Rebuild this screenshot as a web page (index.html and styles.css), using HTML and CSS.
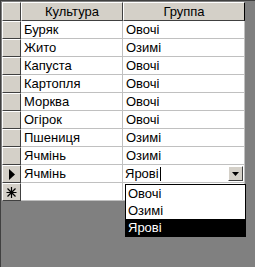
FILE: index.html
```html
<!DOCTYPE html>
<html lang="uk">
<head>
    <meta charset="UTF-8">
    <link rel="stylesheet" href="styles.css">
    <title>Культура</title>
</head>
<body>
    <div class="okno">
        <div class="tablica">
            <div class="ryadok verh">
                <div class="selektor shapka"></div>
                <div class="komirka shapka">Культура</div>
                <div class="komirka shapka">Группа</div>
            </div>
            <div class="ryadok"><div class="selektor"></div><div class="komirka">Буряк</div><div class="komirka">Овочі</div></div>
            <div class="ryadok"><div class="selektor"></div><div class="komirka">Жито</div><div class="komirka">Озимі</div></div>
            <div class="ryadok"><div class="selektor"></div><div class="komirka">Капуста</div><div class="komirka">Овочі</div></div>
            <div class="ryadok"><div class="selektor"></div><div class="komirka">Картопля</div><div class="komirka">Овочі</div></div>
            <div class="ryadok"><div class="selektor"></div><div class="komirka">Морква</div><div class="komirka">Овочі</div></div>
            <div class="ryadok"><div class="selektor"></div><div class="komirka">Огірок</div><div class="komirka">Овочі</div></div>
            <div class="ryadok"><div class="selektor"></div><div class="komirka">Пшениця</div><div class="komirka">Озимі</div></div>
            <div class="ryadok"><div class="selektor"></div><div class="komirka">Ячмінь</div><div class="komirka">Озимі</div></div>
            <div class="ryadok">
                <div class="selektor">
                    <svg width="8" height="11" viewBox="0 0 8 11"><path d="M1 0 L7 5.5 L1 11 Z" fill="#000"/></svg>
                </div>
                <div class="komirka">Ячмінь</div>
                <div class="komirka redag">
                    <span>Ярові</span><span class="kursor"></span>
                    <span class="knopka">
                        <svg width="7" height="4" viewBox="0 0 7 4"><path d="M0 0 H7 L3.5 4 Z" fill="#000"/></svg>
                    </span>
                </div>
            </div>
            <div class="ryadok">
                <div class="selektor">
                    <svg width="11" height="11" viewBox="0 0 11 11" stroke="#000" stroke-width="1.2">
                        <path d="M5.5 0 V11 M0.5 5.5 H10.5 M1.5 1.5 L9.5 9.5 M9.5 1.5 L1.5 9.5"/>
                    </svg>
                </div>
                <div class="komirka"></div>
                <div class="komirka"></div>
            </div>
        </div>

        <div class="spysok">
            <div class="punkt">Овочі</div>
            <div class="punkt">Озимі</div>
            <div class="punkt vybrano">Ярові</div>
        </div>
    </div>
</body>
</html>
```

FILE: styles.css
```css
body {
    margin: 0;
    background-color: #808080;
    font-family: "Liberation Sans", Arial, sans-serif;
    font-size: 13px;
    color: #000;
}

.okno {
    position: relative;
    width: 255px;
    height: 267px;
    border-left: 1px solid #404040;
    border-top: 1px solid #404040;
    box-sizing: border-box;
    padding: 1px 0 0 1px;
}

.tablica {
    display: flex;
    flex-direction: column;
    width: 243px;
}

.ryadok {
    display: grid;
    grid-template-columns: 19px 102px 122px;
    height: 18px;
}
.verh {
    height: 19px;
}

.selektor {
    background-color: #d4d0c8;
    border-top: 1px solid #fff;
    border-left: 1px solid #fff;
    border-right: 1px solid #404040;
    border-bottom: 1px solid #404040;
    box-sizing: border-box;
    display: flex;
    align-items: center;
    justify-content: center;
}

.komirka {
    background-color: #fff;
    border-right: 1px solid #c0c0c0;
    border-bottom: 1px solid #c0c0c0;
    box-sizing: border-box;
    padding-left: 3px;
    line-height: 17px;
    white-space: nowrap;
    overflow: hidden;
}

.shapka {
    background-color: #d4d0c8;
    border-top: 1px solid #fff;
    border-left: 1px solid #fff;
    border-right: 1px solid #404040;
    border-bottom: 1px solid #404040;
    text-align: center;
    padding-left: 0;
    line-height: 17px;
}
.komirka.shapka:last-child {
    border-right: 1px solid #000;
}

.redag {
    display: flex;
    align-items: center;
    padding-left: 2px;
}
.kursor {
    width: 1px;
    height: 14px;
    background-color: #000;
    margin-left: 1px;
}
.knopka {
    margin-left: auto;
    width: 15px;
    height: 15px;
    background-color: #d4d0c8;
    border-top: 1px solid #fff;
    border-left: 1px solid #fff;
    border-right: 1px solid #404040;
    border-bottom: 1px solid #404040;
    box-sizing: border-box;
    display: flex;
    align-items: center;
    justify-content: center;
    margin-right: 1px;
}

.spysok {
    position: absolute;
    left: 124px;
    top: 183px;
    width: 119px;
    background-color: #fff;
    border: 1px solid #000;
}
.punkt {
    height: 17px;
    line-height: 17px;
    padding-left: 2px;
}
.vybrano {
    background-color: #000;
    color: #fff;
}
```
